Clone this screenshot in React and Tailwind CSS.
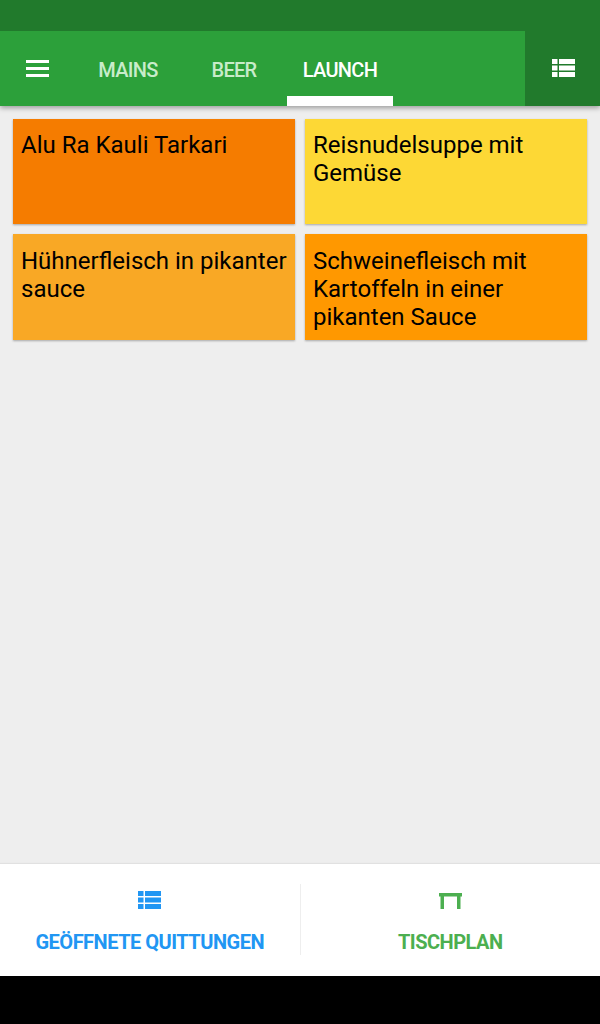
import React from 'react';

const dishes = [
    { name: 'Alu Ra Kauli Tarkari', color: 'bg-[#f57c00]', pad: 'pt-[12px]' },
    { name: 'Reisnudelsuppe mit Gemüse', color: 'bg-[#fdd835]', pad: 'pt-[12px]' },
    { name: 'Hühnerfleisch in pikanter sauce', color: 'bg-[#f9a825]', pad: 'pt-[13px]' },
    { name: 'Schweinefleisch mit Kartoffeln in einer pikanten Sauce', color: 'bg-[#ff9800]', pad: 'pt-[13px]' },
];

function ListIcon({ className }) {
    return (
        <svg viewBox="0 0 23 18" className={className} fill="currentColor">
            <path d="M0 0h5.500v5H0zM7 0h16v5H7zM0 6.500h5.500v5H0zM7 6.500h16v5H7zM0 13h5.500v5H0zM7 13h16v5H7z" />
        </svg>
    );
}

function TableIcon({ className }) {
    return (
        <svg viewBox="0 0 23 16" className={className} fill="currentColor">
            <path d="M0 0h23v3.500h-1.500V16h-3.500V3.500H5V16H1.500V3.500H0z" />
        </svg>
    );
}

export default function App() {
    return (
        <div className="flex h-[1024px] w-[600px] flex-col overflow-hidden bg-[#eeeeee] font-['Roboto',sans-serif]">
            {/* Status bar and toolbar */}
            <div className="relative z-10 bg-[#217a2c] shadow-[0_2px_5px_rgba(0,0,0,0.35)]">
                <div className="h-[31px]" />
                <div className="flex h-[75px]">
                    <div className="flex flex-1 bg-[#2ca03a]">
                        <button className="flex w-[75px] items-center justify-center pr-[1px] text-white">
                            <span className="flex w-[23px] flex-col gap-[4px]">
                                <span className="h-[3px] bg-white" />
                                <span className="h-[3px] bg-white" />
                                <span className="h-[3px] bg-white" />
                            </span>
                        </button>
                        <nav className="flex text-[20px] font-medium tracking-[-0.7px]">
                            <span className="flex w-[106px] items-center justify-center pt-[2px] text-[#c8ecca]">MAINS</span>
                            <span className="flex w-[106px] items-center justify-center pt-[2px] text-[#c8ecca]">BEER</span>
                            <span className="flex w-[106px] items-center justify-center border-b-[10px] border-white pt-[12px] text-white">LAUNCH</span>
                        </nav>
                    </div>
                    <button className="flex w-[75px] items-center justify-center pb-[1px] pl-[1px] text-white">
                        <ListIcon className="h-[18px] w-[23px]" />
                    </button>
                </div>
            </div>

            {/* Menu items */}
            <div className="grid flex-1 grid-cols-2 grid-rows-[105px_106px] content-start gap-[10px] px-[13px] pt-[13px]">
                {dishes.map((dish) => (
                    <div
                        key={dish.name}
                        className={`px-[8px] text-[24px] leading-[28px] text-black shadow-[0_1px_2px_rgba(0,0,0,0.3)] ${dish.pad} ${dish.color}`}
                    >
                        {dish.name}
                    </div>
                ))}
            </div>

            {/* Bottom actions */}
            <div className="flex h-[112px] items-start bg-white pt-[27px] shadow-[0_-1px_1px_rgba(0,0,0,0.05)]">
                <button className="flex flex-1 flex-col items-center gap-[22px] text-[#2196f3]">
                    <ListIcon className="h-[18px] w-[23px]" />
                    <span className="text-[20px] font-bold leading-[22px] tracking-[-0.5px]">GEÖFFNETE QUITTUNGEN</span>
                </button>
                <div className="-mt-[7px] h-[71px] w-px bg-[#eeeeee]" />
                <button className="flex flex-1 flex-col items-center gap-[22px] text-[#4caf50]">
                    <span className="flex h-[18px] items-end pl-[1px]">
                        <TableIcon className="h-[16px] w-[23px]" />
                    </span>
                    <span className="text-[20px] font-bold leading-[22px] tracking-[-0.5px]">TISCHPLAN</span>
                </button>
            </div>
            <div className="h-[48px] bg-black" />
        </div>
    );
}
